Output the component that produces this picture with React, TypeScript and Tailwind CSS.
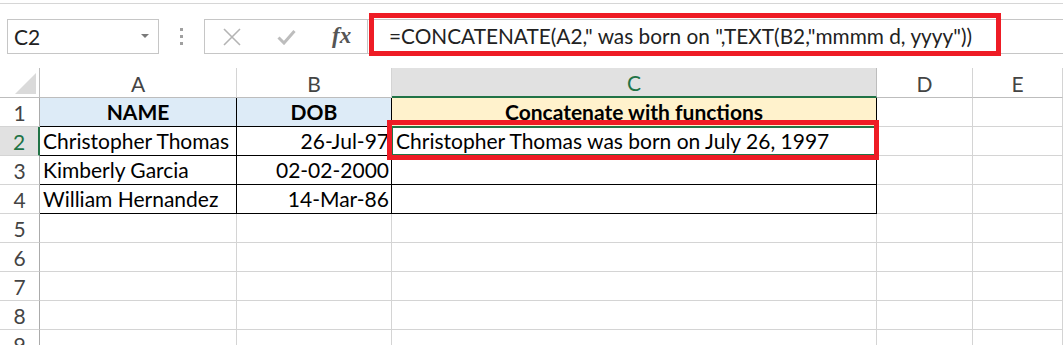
import React from "react";

type CellProps = {
  children?: React.ReactNode;
  className?: string;
};

function Cell({ children, className = "" }: CellProps) {
  return (
    <div className={`box-border border-r border-b overflow-hidden whitespace-nowrap ${className}`}>
      {children}
    </div>
  );
}

export default function App() {
  const cols = ["A", "B", "C", "D", "E"];
  const data: Record<number, string[]> = {
    1: ["NAME", "DOB", "Concatenate with functions"],
    2: ["Christopher Thomas", "26-Jul-97", "Christopher Thomas was born on July 26, 1997"],
    3: ["Kimberly Garcia", "02-02-2000", ""],
    4: ["William Hernandez", "14-Mar-86", ""],
  };
  const rows = [1, 2, 3, 4, 5, 6, 7, 8, 9];

  return (
    <div
      className="relative w-[1063px] h-[345px] overflow-hidden bg-white text-black"
      style={{ fontFamily: "Lato, 'Open Sans', sans-serif" }}
    >
      {/* toolbar */}
      <div className="h-[68px] flex flex-col">
        <div className="h-[4px] border-b border-[#d6d6d6]" />
        <div className="flex items-stretch h-[35px] mt-[15px] pl-[7px]">
          <div className="w-[152px] border border-[#c6c6c6] flex items-center justify-between pl-[6px] pr-[9px]">
            <span className="text-[21px] text-[#222] leading-none">C2</span>
            <svg width="8" height="5" viewBox="0 0 8 5">
              <path d="M0 0 L8 0 L4 4 Z" fill="#7a7a7a" />
            </svg>
          </div>
          <div className="w-[45px] flex flex-col items-center justify-center gap-[4px]">
            <div className="w-[3px] h-[3px] bg-[#a0a0a0]" />
            <div className="w-[3px] h-[3px] bg-[#a0a0a0]" />
            <div className="w-[3px] h-[3px] bg-[#a0a0a0]" />
          </div>
          <div className="w-[164px] border border-[#c6c6c6] flex items-center pl-[18px] gap-[36px]">
            <svg width="18" height="18" viewBox="0 0 18 18">
              <path d="M1 1 L17 17 M17 1 L1 17" stroke="#b4b4b4" strokeWidth="1.6" fill="none" />
            </svg>
            <svg width="19" height="16" viewBox="0 0 19 16">
              <path d="M1.5 8.5 L7 14 L17.5 2" stroke="#bdbdbd" strokeWidth="3" fill="none" />
            </svg>
            <span
              className="text-[23px] italic font-bold text-[#555] leading-none -mt-[2px]"
              style={{ fontFamily: "'Liberation Serif', serif" }}
            >
              fx
            </span>
          </div>
          <div className="flex-1 border-t border-b border-[#c6c6c6] flex items-center pl-[21px]">
            <span className="text-[20.8px] text-[#222] leading-none">
              =CONCATENATE(A2," was born on ",TEXT(B2,"mmmm d, yyyy"))
            </span>
          </div>
        </div>
      </div>

      {/* grid */}
      <div className="grid grid-cols-[40px_197px_155px_485px_96px_1fr] grid-rows-[30px_repeat(9,29px)] text-[21px]">
        {/* header row */}
        <div className="box-border border-r border-b border-[#bdbdbd] relative">
          <svg className="absolute left-[15px] top-[5px]" width="21" height="21" viewBox="0 0 21 21">
            <path d="M21 0 L21 21 L0 21 Z" fill="#dadada" />
          </svg>
        </div>
        {cols.map((c) => (
          <div
            key={c}
            className={`box-border border-r flex items-center justify-center ${
              c === "C"
                ? "bg-[#e1e1e1] border-b-2 border-b-[#217346] border-r-[#bdbdbd] text-[#217346]"
                : "border-b border-b-[#bdbdbd] border-r-[#d4d4d4] text-[#444]"
            }`}
          >
            <span className="leading-none mt-[1px]">{c}</span>
          </div>
        ))}

        {rows.map((r) => {
          const d = data[r];
          const isSel = r === 2;
          return (
            <React.Fragment key={r}>
              <div
                className={`box-border border-b border-b-[#d4d4d4] flex items-end justify-center pb-[3px] ${
                  isSel
                    ? "bg-[#e1e1e1] border-r-2 border-r-[#217346] text-[#217346]"
                    : "border-r border-r-[#ababab] text-[#444]"
                }`}
              >
                <span className="leading-none">{r}</span>
              </div>
              {/* A */}
              <Cell
                className={`${d ? "border-black" : "border-[#d4d4d4]"} ${
                  r === 1 ? "bg-[#ddebf7] font-bold justify-center" : "pl-[3px]"
                } flex items-end pb-[4px]`}
              >
                <span className="leading-none">{d ? d[0] : ""}</span>
              </Cell>
              {/* B */}
              <Cell
                className={`${d ? "border-black" : "border-[#d4d4d4]"} ${
                  r === 1 ? "bg-[#ddebf7] font-bold justify-center" : "justify-end pr-[2px]"
                } flex items-end pb-[4px]`}
              >
                <span className="leading-none">{d ? d[1] : ""}</span>
              </Cell>
              {/* C */}
              <Cell
                className={`${d ? "border-black" : "border-[#d4d4d4]"} ${
                  r === 1 ? "bg-[#fff2cc] font-bold justify-center" : "pl-[4px]"
                } flex items-end pb-[4px] relative overflow-visible`}
              >
                <span className="leading-none">{d ? d[2] : ""}</span>
                {isSel && (
                  <div className="absolute -left-[1px] -top-[1px] -right-[1px] -bottom-[1px] border-2 border-[#217346] pointer-events-none" />
                )}
              </Cell>
              {/* D */}
              <Cell className="border-[#d4d4d4]" />
              {/* E */}
              <Cell className="border-[#d4d4d4]" />
            </React.Fragment>
          );
        })}
      </div>

      {/* red highlight boxes */}
      <div className="absolute left-[369px] top-[13px] w-[632px] h-[43px] border-[5px] border-[#ee1c25] pointer-events-none" />
      <div className="absolute left-[387px] top-[120px] w-[492px] h-[40px] border-[5px] border-[#ee1c25] pointer-events-none" />
    </div>
  );
}
